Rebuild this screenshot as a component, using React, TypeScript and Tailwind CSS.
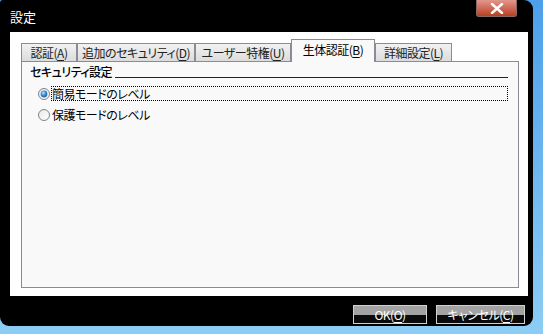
import React from 'react';

const font = "[font-family:'Noto_Sans_CJK_JP','Noto_Sans',sans-serif] [font-feature-settings:'palt']";

type Tab = { label: string; key: string; width: string; active?: boolean };

const tabs: Tab[] = [
  { label: '認証', key: 'A', width: 'w-[56px]' },
  { label: '追加のセキュリティ', key: 'D', width: 'w-[118px]' },
  { label: 'ユーザー特権', key: 'U', width: 'w-[96px]' },
  { label: '生体認証', key: 'B', width: 'w-[84px]', active: true },
  { label: '詳細設定', key: 'L', width: 'w-[77px]' },
];

const Mnemonic = ({ label, k }: { label: string; k: string }) => (
  <span>
    {label}(<span className="underline underline-offset-2">{k}</span>)
  </span>
);

const Radio = ({ checked }: { checked?: boolean }) => (
  <svg width="12" height="12" viewBox="0 0 12 12" className="shrink-0">
    <defs>
      <linearGradient id="rg" x1="0" y1="0" x2="1" y2="1">
        <stop offset="0" stopColor="#e8e8e8" />
        <stop offset="1" stopColor="#ffffff" />
      </linearGradient>
      <radialGradient id="dot" cx="0.4" cy="0.35" r="0.7">
        <stop offset="0" stopColor="#bfe3fb" />
        <stop offset="0.5" stopColor="#3b8fd8" />
        <stop offset="1" stopColor="#1b5a9e" />
      </radialGradient>
    </defs>
    <circle cx="6" cy="6" r="5.5" fill="url(#rg)" stroke="#7d838d" strokeWidth="1" />
    {checked && <circle cx="6" cy="6" r="3.4" fill="url(#dot)" />}
  </svg>
);

const DlgButton = ({ label, k, width }: { label: string; k: string; width: string }) => (
  <div className={`relative ${width} h-[19px] border border-[#d0d0d0] flex flex-col`}>
    <div className="h-1/2 bg-[#a3a3a3]" />
    <div className="h-1/2 bg-[#0b0b0b]" />
    <div className="absolute inset-0 flex items-center justify-center text-white text-[12px] leading-none tracking-[-0.5px]">
      <Mnemonic label={label} k={k} />
    </div>
  </div>
);

export default function App() {
  return (
    <div className={`w-[543px] h-[334px] overflow-hidden bg-gradient-to-b from-[#4c9fea] to-[#8ccdf5] ${font}`}>
      <div className="w-[533px] h-[326px] bg-black rounded-tl-[3px] rounded-tr-[9px] rounded-br-[9px] rounded-bl-[9px] flex flex-col">
        {/* title bar */}
        <div className="h-[32px] flex items-start">
          <span className="text-white text-[13px] leading-none mt-[10px] ml-[10px]">設定</span>
          <div className="ml-auto mr-[16px] w-[41px] h-[17px] rounded-b-[3px] border border-t-0 border-[#8a6a66] bg-gradient-to-b from-[#e2978c] via-[#cf6a5a] to-[#b5401c] flex items-center justify-center">
            <svg width="14" height="11" viewBox="0 0 14 11">
              <path d="M2 1 L12 10 M12 1 L2 10" stroke="#ffffff" strokeWidth="2.4" strokeLinecap="round" />
            </svg>
          </div>
        </div>

        {/* client area */}
        <div className="ml-[10px] w-[518px] h-[264px] bg-white flex flex-col">
          <div className="mt-[7px] ml-[11px] h-[22px] flex items-end relative z-10">
            {tabs.map((t) =>
              t.active ? (
                <div
                  key={t.key}
                  className={`${t.width} h-[23px] -mb-px border border-b-0 border-[#898c95] bg-[#f9f9f9] flex items-start justify-center pt-[2px] text-[12px] tracking-[-0.5px] text-black leading-[16px]`}
                >
                  <Mnemonic label={t.label} k={t.key} />
                </div>
              ) : (
                <div
                  key={t.key}
                  className={`${t.width} h-[18px] border border-b-0 border-[#898c95] bg-gradient-to-b from-[#f2f2f2] to-[#dcdcdc] flex items-center justify-center text-[12px] tracking-[-0.5px] text-[#222] leading-[16px]`}
                >
                  <Mnemonic label={t.label} k={t.key} />
                </div>
              )
            )}
          </div>
          <div className="ml-[11px] w-[498px] h-[227px] border border-[#898c95] bg-[#f9f9f9] flex flex-col pl-[8px] pr-[10px] pt-[2px]">
            <div className="flex items-end gap-[3px] h-[16px]">
              <span className="text-[12px] leading-[16px] tracking-[-0.5px] font-medium text-black">セキュリティ設定</span>
              <div className="flex-1 h-px bg-[#222] mb-[2px]" />
            </div>
            <div className="mt-[6px] ml-[8px] flex items-center h-[15px]">
              <Radio checked />
              <div className="ml-px flex-1 h-[15px] border border-dotted border-black flex items-center text-[12px] leading-none tracking-[-0.5px] text-black">
                簡易モードのレベル
              </div>
            </div>
            <div className="mt-[6px] ml-[8px] flex items-center h-[15px]">
              <Radio />
              <div className="ml-[2px] flex-1 flex items-center text-[12px] leading-none tracking-[-0.5px] text-black">
                保護モードのレベル
              </div>
            </div>
          </div>
        </div>

        {/* buttons */}
        <div className="mt-[9px] mr-[8px] flex justify-end gap-[9px]">
          <DlgButton label="OK" k="O" width="w-[74px]" />
          <DlgButton label="キャンセル" k="C" width="w-[89px]" />
        </div>
      </div>
    </div>
  );
}
